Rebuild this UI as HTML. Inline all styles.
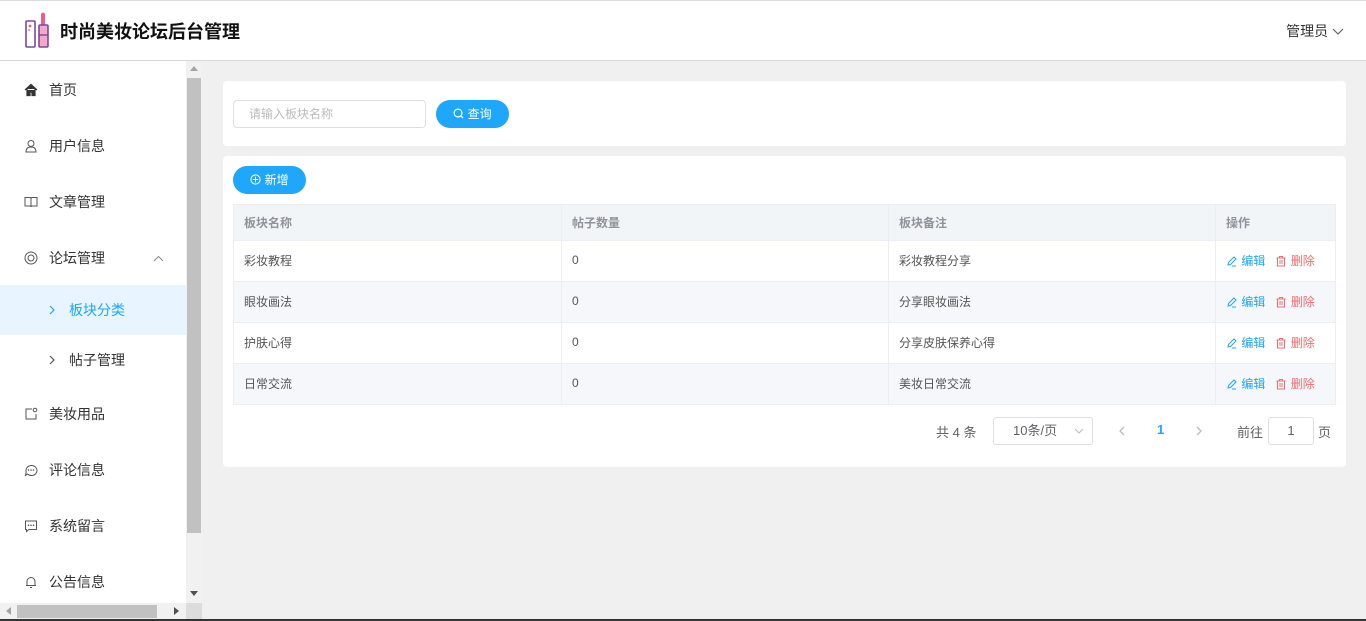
<!DOCTYPE html>
<html><head><meta charset="utf-8"><style>
*{margin:0;padding:0;box-sizing:border-box}
body{width:1366px;height:621px;overflow:hidden;font-family:"Liberation Sans","Noto Sans CJK SC",sans-serif;background:#f0f0f0;position:relative;color:#333}
.hdr{position:absolute;left:0;top:0;width:1366px;height:61px;background:#fff;border-top:1px solid #ddd;border-bottom:1px solid #d8d8d8}
.title{position:absolute;left:60px;top:17px;font-size:18px;font-weight:bold;color:#111}
.admin{position:absolute;right:22px;top:20px;font-size:14px;color:#333}
.side{position:absolute;left:0;top:61px;width:186px;height:542px;background:#fff;overflow:hidden}
.item{position:absolute;left:0;width:186px;height:50px;font-size:14px;color:#333;line-height:50px}
.item .ic{position:absolute;left:24px;top:18px;width:14px;height:14px}
.item span.t{position:absolute;left:49px}
.vs{position:absolute;left:186px;top:61px;width:16px;height:542px;background:#f1f1f1}
.hs{position:absolute;left:0;top:603px;width:202px;height:17px;background:#f1f1f1}
.card{position:absolute;left:223px;width:1123px;background:#fff;border-radius:4px}
.btn{position:absolute;height:28px;border-radius:14px;background:#1ea7fd;color:#fff;font-size:12px;line-height:28px;text-align:center}
table{position:absolute;left:233px;top:204px;width:1103px;border-collapse:collapse;font-size:12px}
td,th{border:1px solid #ebeef5;padding:0 10px;text-align:left;height:41px;color:#555}
td{padding-bottom:2px}
th{height:36px;background:#f2f5f8;color:#909399;font-weight:bold}
tr.s td{background:#f5f7fa}
.e{color:#1ea7fd}.d{color:#f56c6c}
.e svg,.d svg{vertical-align:-2px}
</style></head><body>
<div class="hdr">
<svg style="position:absolute;left:24px;top:10px" width="28" height="38" viewBox="0 0 28 38"><rect x="2" y="10" width="9" height="26" rx="1" fill="#fff" stroke="#7a4a9a" stroke-width="1.6"/><circle cx="6" cy="15" r="1.4" fill="#f05a8c"/><circle cx="5" cy="19" r="0.9" fill="#f05a8c"/><path d="M17 14 V3 Q19 0 21 3 V14Z" fill="#f05a8c"/><rect x="15" y="14" width="9" height="22" rx="1" fill="#f7a6c8" stroke="#7a4a9a" stroke-width="1.6"/><line x1="15" y1="24" x2="24" y2="24" stroke="#7a4a9a" stroke-width="1.4"/></svg>
<div class="title">时尚美妆论坛后台管理</div>
<div class="admin">管理员 <svg width="12" height="8" viewBox="0 0 12 8"><path d="M1 1 L6 6 L11 1" fill="none" stroke="#666" stroke-width="1.2"/></svg></div>
</div>
<div class="side">
<div class="item" style="top:4px"><svg class="ic" viewBox="0 0 14 14"><path d="M1 7 L7 1.5 L13 7 M3 6 V12.5 H6 V9 H8 V12.5 H11 V6" fill="#333" stroke="#333" stroke-width="1.2"/></svg><span class="t">首页</span></div>
<div class="item" style="top:60px"><svg class="ic" viewBox="0 0 14 14"><circle cx="7" cy="4.5" r="3" fill="none" stroke="#555"/><path d="M2 13 Q2 8 7 8 Q12 8 12 13Z" fill="none" stroke="#555"/></svg><span class="t">用户信息</span></div>
<div class="item" style="top:116px"><svg class="ic" viewBox="0 0 14 14"><path d="M1 2.5 H6 Q7 2.5 7 4 V12 Q7 11 6 11 H1Z M13 2.5 H8 Q7 2.5 7 4 V12 Q7 11 8 11 H13Z" fill="none" stroke="#555"/></svg><span class="t">文章管理</span></div>
<div class="item" style="top:172px"><svg class="ic" viewBox="0 0 14 14"><circle cx="7" cy="7" r="6" fill="none" stroke="#555"/><circle cx="7" cy="7" r="3" fill="none" stroke="#555"/></svg><span class="t">论坛管理</span><svg style="position:absolute;left:153px;top:22px" width="11" height="7" viewBox="0 0 11 7"><path d="M1 6 L5.5 1.5 L10 6" fill="none" stroke="#888"/></svg></div>
<div class="item" style="top:224px;background:#e8f4ff;color:#1ea7fd"><svg style="position:absolute;left:49px;top:20px" width="6" height="10" viewBox="0 0 6 10"><path d="M1 1 L5 5 L1 9" fill="none" stroke="#1ea7fd" stroke-width="1.2"/></svg><span class="t" style="left:69px">板块分类</span></div>
<div class="item" style="top:274px"><svg style="position:absolute;left:49px;top:20px" width="6" height="10" viewBox="0 0 6 10"><path d="M1 1 L5 5 L1 9" fill="none" stroke="#555" stroke-width="1.2"/></svg><span class="t" style="left:69px">帖子管理</span></div>
<div class="item" style="top:328px"><svg class="ic" viewBox="0 0 14 14"><path d="M8 2 H2 V12 H12 V7" fill="none" stroke="#555"/><circle cx="11" cy="3" r="1.8" fill="none" stroke="#555"/></svg><span class="t">美妆用品</span></div>
<div class="item" style="top:384px"><svg class="ic" viewBox="0 0 14 14"><path d="M3.5 11 A5.5 5 0 1 0 2.2 9 L1.5 12.5 Z" fill="none" stroke="#555"/><circle cx="4.5" cy="7" r=".8" fill="#555"/><circle cx="7" cy="7" r=".8" fill="#555"/><circle cx="9.5" cy="7" r=".8" fill="#555"/></svg><span class="t">评论信息</span></div>
<div class="item" style="top:440px"><svg class="ic" viewBox="0 0 14 14"><path d="M1.5 2 H12.5 V10.5 H5 L2.5 12.5 V10.5 H1.5Z" fill="none" stroke="#555"/><circle cx="4.5" cy="6.3" r=".8" fill="#555"/><circle cx="7" cy="6.3" r=".8" fill="#555"/><circle cx="9.5" cy="6.3" r=".8" fill="#555"/></svg><span class="t">系统留言</span></div>
<div class="item" style="top:496px"><svg class="ic" viewBox="0 0 14 14"><path d="M3 10.5 V6.5 A4 4 0 0 1 11 6.5 V10.5 H2 H12 M6 12.5 H8" fill="none" stroke="#555"/></svg><span class="t">公告信息</span></div>
</div>
<div class="vs"><div style="position:absolute;left:1px;top:17px;width:14px;height:455px;background:#c1c1c1"></div><svg style="position:absolute;left:4px;top:5px" width="8" height="5"><path d="M0 5 L4 0 L8 5Z" fill="#a3a3a3"/></svg><svg style="position:absolute;left:4px;top:530px" width="8" height="5"><path d="M0 0 L4 5 L8 0Z" fill="#505050"/></svg></div>
<div class="hs"><div style="position:absolute;left:17px;top:2px;width:140px;height:13px;background:#c1c1c1"></div><svg style="position:absolute;left:6px;top:4px" width="5" height="8"><path d="M5 0 L0 4 L5 8Z" fill="#a3a3a3"/></svg><svg style="position:absolute;left:174px;top:4px" width="5" height="8"><path d="M0 0 L5 4 L0 8Z" fill="#505050"/></svg><div style="position:absolute;left:186px;top:0;width:16px;height:17px;background:#dcdcdc"></div></div>
<div style="position:absolute;left:0;top:619px;width:1366px;height:2px;background:#333"></div>
<div class="card" style="top:81px;height:65px">
<div style="position:absolute;left:10px;top:19px;width:193px;height:28px;border:1px solid #dcdfe6;border-radius:4px;font-size:12px;color:#bbb;line-height:26px;padding-left:15px">请输入板块名称</div>
<div class="btn" style="left:213px;top:19px;width:73px"><svg width="11" height="11" viewBox="0 0 12 12" style="vertical-align:-1px"><circle cx="5.5" cy="5.5" r="4.3" fill="none" stroke="#fff" stroke-width="1.3"/><path d="M8.5 8.5 L11 11" stroke="#fff" stroke-width="1.3"/></svg> 查询</div>
</div>
<div class="card" style="top:156px;height:311px">
<div class="btn" style="left:10px;top:10px;width:73px"><svg width="11" height="11" viewBox="0 0 12 12" style="vertical-align:-1px"><circle cx="6" cy="6" r="5" fill="none" stroke="#fff" stroke-width="1.1"/><path d="M6 3 V9 M3 6 H9" stroke="#fff" stroke-width="1.1"/></svg> 新增</div>
<div style="position:absolute;left:713px;top:266px;font-size:13px;color:#606266">共 4 条</div>
<div style="position:absolute;left:770px;top:261px;width:100px;height:28px;border:1px solid #dcdfe6;border-radius:3px;font-size:13px;color:#606266;line-height:26px;padding-left:19px">10条/页<svg style="position:absolute;right:8px;top:10px" width="10" height="6"><path d="M1 1 L5 5 L9 1" fill="none" stroke="#bbb"/></svg></div>
<svg style="position:absolute;left:896px;top:270px" width="6" height="10"><path d="M5 1 L1 5 L5 9" fill="none" stroke="#bbb" stroke-width="1.3"/></svg>
<div style="position:absolute;left:934px;top:266px;font-size:13px;font-weight:bold;color:#1ea7fd">1</div>
<svg style="position:absolute;left:973px;top:270px" width="6" height="10"><path d="M1 1 L5 5 L1 9" fill="none" stroke="#bbb" stroke-width="1.3"/></svg>
<div style="position:absolute;left:1014px;top:266px;font-size:13px;color:#606266">前往</div>
<div style="position:absolute;left:1045px;top:261px;width:46px;height:28px;border:1px solid #dcdfe6;border-radius:3px;font-size:13px;color:#606266;line-height:26px;text-align:center">1</div>
<div style="position:absolute;left:1095px;top:266px;font-size:13px;color:#606266">页</div>
</div>
<table>
<tr><th style="width:328px">板块名称</th><th style="width:327px">帖子数量</th><th style="width:327px">板块备注</th><th>操作</th></tr>
<tr><td>彩妆教程</td><td>0</td><td>彩妆教程分享</td><td><span class="e"><svg width="12" height="12" viewBox="0 0 12 12"><path d="M2 10 L2.5 7.5 L8 2 L10 4 L4.5 9.5Z M6 11 H10" fill="none" stroke="#1ea7fd"/></svg> 编辑</span> &nbsp; <span class="d"><svg width="12" height="12" viewBox="0 0 12 12"><path d="M1.5 3 H10.5 M4.5 3 V1.5 H7.5 V3 M2.5 3 V11 H9.5 V3 M5 5 V9 M7 5 V9" fill="none" stroke="#f56c6c"/></svg> 删除</span></td></tr>
<tr class="s"><td>眼妆画法</td><td>0</td><td>分享眼妆画法</td><td><span class="e"><svg width="12" height="12" viewBox="0 0 12 12"><path d="M2 10 L2.5 7.5 L8 2 L10 4 L4.5 9.5Z M6 11 H10" fill="none" stroke="#1ea7fd"/></svg> 编辑</span> &nbsp; <span class="d"><svg width="12" height="12" viewBox="0 0 12 12"><path d="M1.5 3 H10.5 M4.5 3 V1.5 H7.5 V3 M2.5 3 V11 H9.5 V3 M5 5 V9 M7 5 V9" fill="none" stroke="#f56c6c"/></svg> 删除</span></td></tr>
<tr><td>护肤心得</td><td>0</td><td>分享皮肤保养心得</td><td><span class="e"><svg width="12" height="12" viewBox="0 0 12 12"><path d="M2 10 L2.5 7.5 L8 2 L10 4 L4.5 9.5Z M6 11 H10" fill="none" stroke="#1ea7fd"/></svg> 编辑</span> &nbsp; <span class="d"><svg width="12" height="12" viewBox="0 0 12 12"><path d="M1.5 3 H10.5 M4.5 3 V1.5 H7.5 V3 M2.5 3 V11 H9.5 V3 M5 5 V9 M7 5 V9" fill="none" stroke="#f56c6c"/></svg> 删除</span></td></tr>
<tr class="s"><td>日常交流</td><td>0</td><td>美妆日常交流</td><td><span class="e"><svg width="12" height="12" viewBox="0 0 12 12"><path d="M2 10 L2.5 7.5 L8 2 L10 4 L4.5 9.5Z M6 11 H10" fill="none" stroke="#1ea7fd"/></svg> 编辑</span> &nbsp; <span class="d"><svg width="12" height="12" viewBox="0 0 12 12"><path d="M1.5 3 H10.5 M4.5 3 V1.5 H7.5 V3 M2.5 3 V11 H9.5 V3 M5 5 V9 M7 5 V9" fill="none" stroke="#f56c6c"/></svg> 删除</span></td></tr>
</table>
</body></html>
